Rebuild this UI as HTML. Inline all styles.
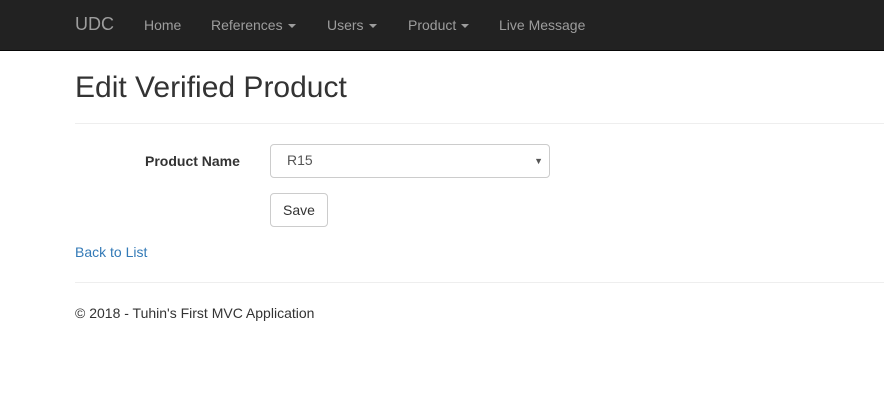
<!DOCTYPE html>
<html><head><style>
body{margin:0;width:884px;height:418px;background:#fff;font-family:"Liberation Sans",sans-serif;font-size:14px;color:#333;position:relative;overflow:hidden}
.nav{position:absolute;left:0;top:0;width:884px;height:50px;background:#222;border-bottom:1px solid #080808}
.nav span{position:absolute;top:16px;color:#9d9d9d;font-size:14px;line-height:18px}
.brand{font-size:18px!important;top:15px!important}
.caret{display:inline-block;width:0;height:0;border-top:4px solid;border-left:4px solid transparent;border-right:4px solid transparent;vertical-align:middle;margin-left:5px}
.a{position:absolute}
</style></head><body>
<div class="nav">
<span class="brand" style="left:75px">UDC</span>
<span style="left:144px">Home</span>
<span style="left:211px">References<i class="caret"></i></span>
<span style="left:327px">Users<i class="caret"></i></span>
<span style="left:408px">Product<i class="caret"></i></span>
<span style="left:499px">Live Message</span>
</div>
<div class="a" style="left:75px;top:70px;font-size:30px;line-height:36px;color:#333">Edit Verified Product</div>
<div class="a" style="left:75px;top:123px;width:809px;border-top:1px solid #eee"></div>
<div class="a" style="left:145px;top:153px;font-weight:bold">Product Name</div>
<div class="a" style="left:270px;top:144px;width:278px;height:32px;border:1px solid #ccc;border-radius:4px"><span class="a" style="left:16px;top:7px;color:#555">R15</span><span class="a" style="right:6px;top:11px;font-size:9px;color:#555">▼</span></div>
<div class="a" style="left:270px;top:193px;width:56px;height:32px;border:1px solid #ccc;border-radius:4px;text-align:center;line-height:32px">Save</div>
<div class="a" style="left:75px;top:244px;color:#337ab7">Back to List</div>
<div class="a" style="left:75px;top:282px;width:809px;border-top:1px solid #eee"></div>
<div class="a" style="left:75px;top:305px">© 2018 - Tuhin's First MVC Application</div>
</body></html>
